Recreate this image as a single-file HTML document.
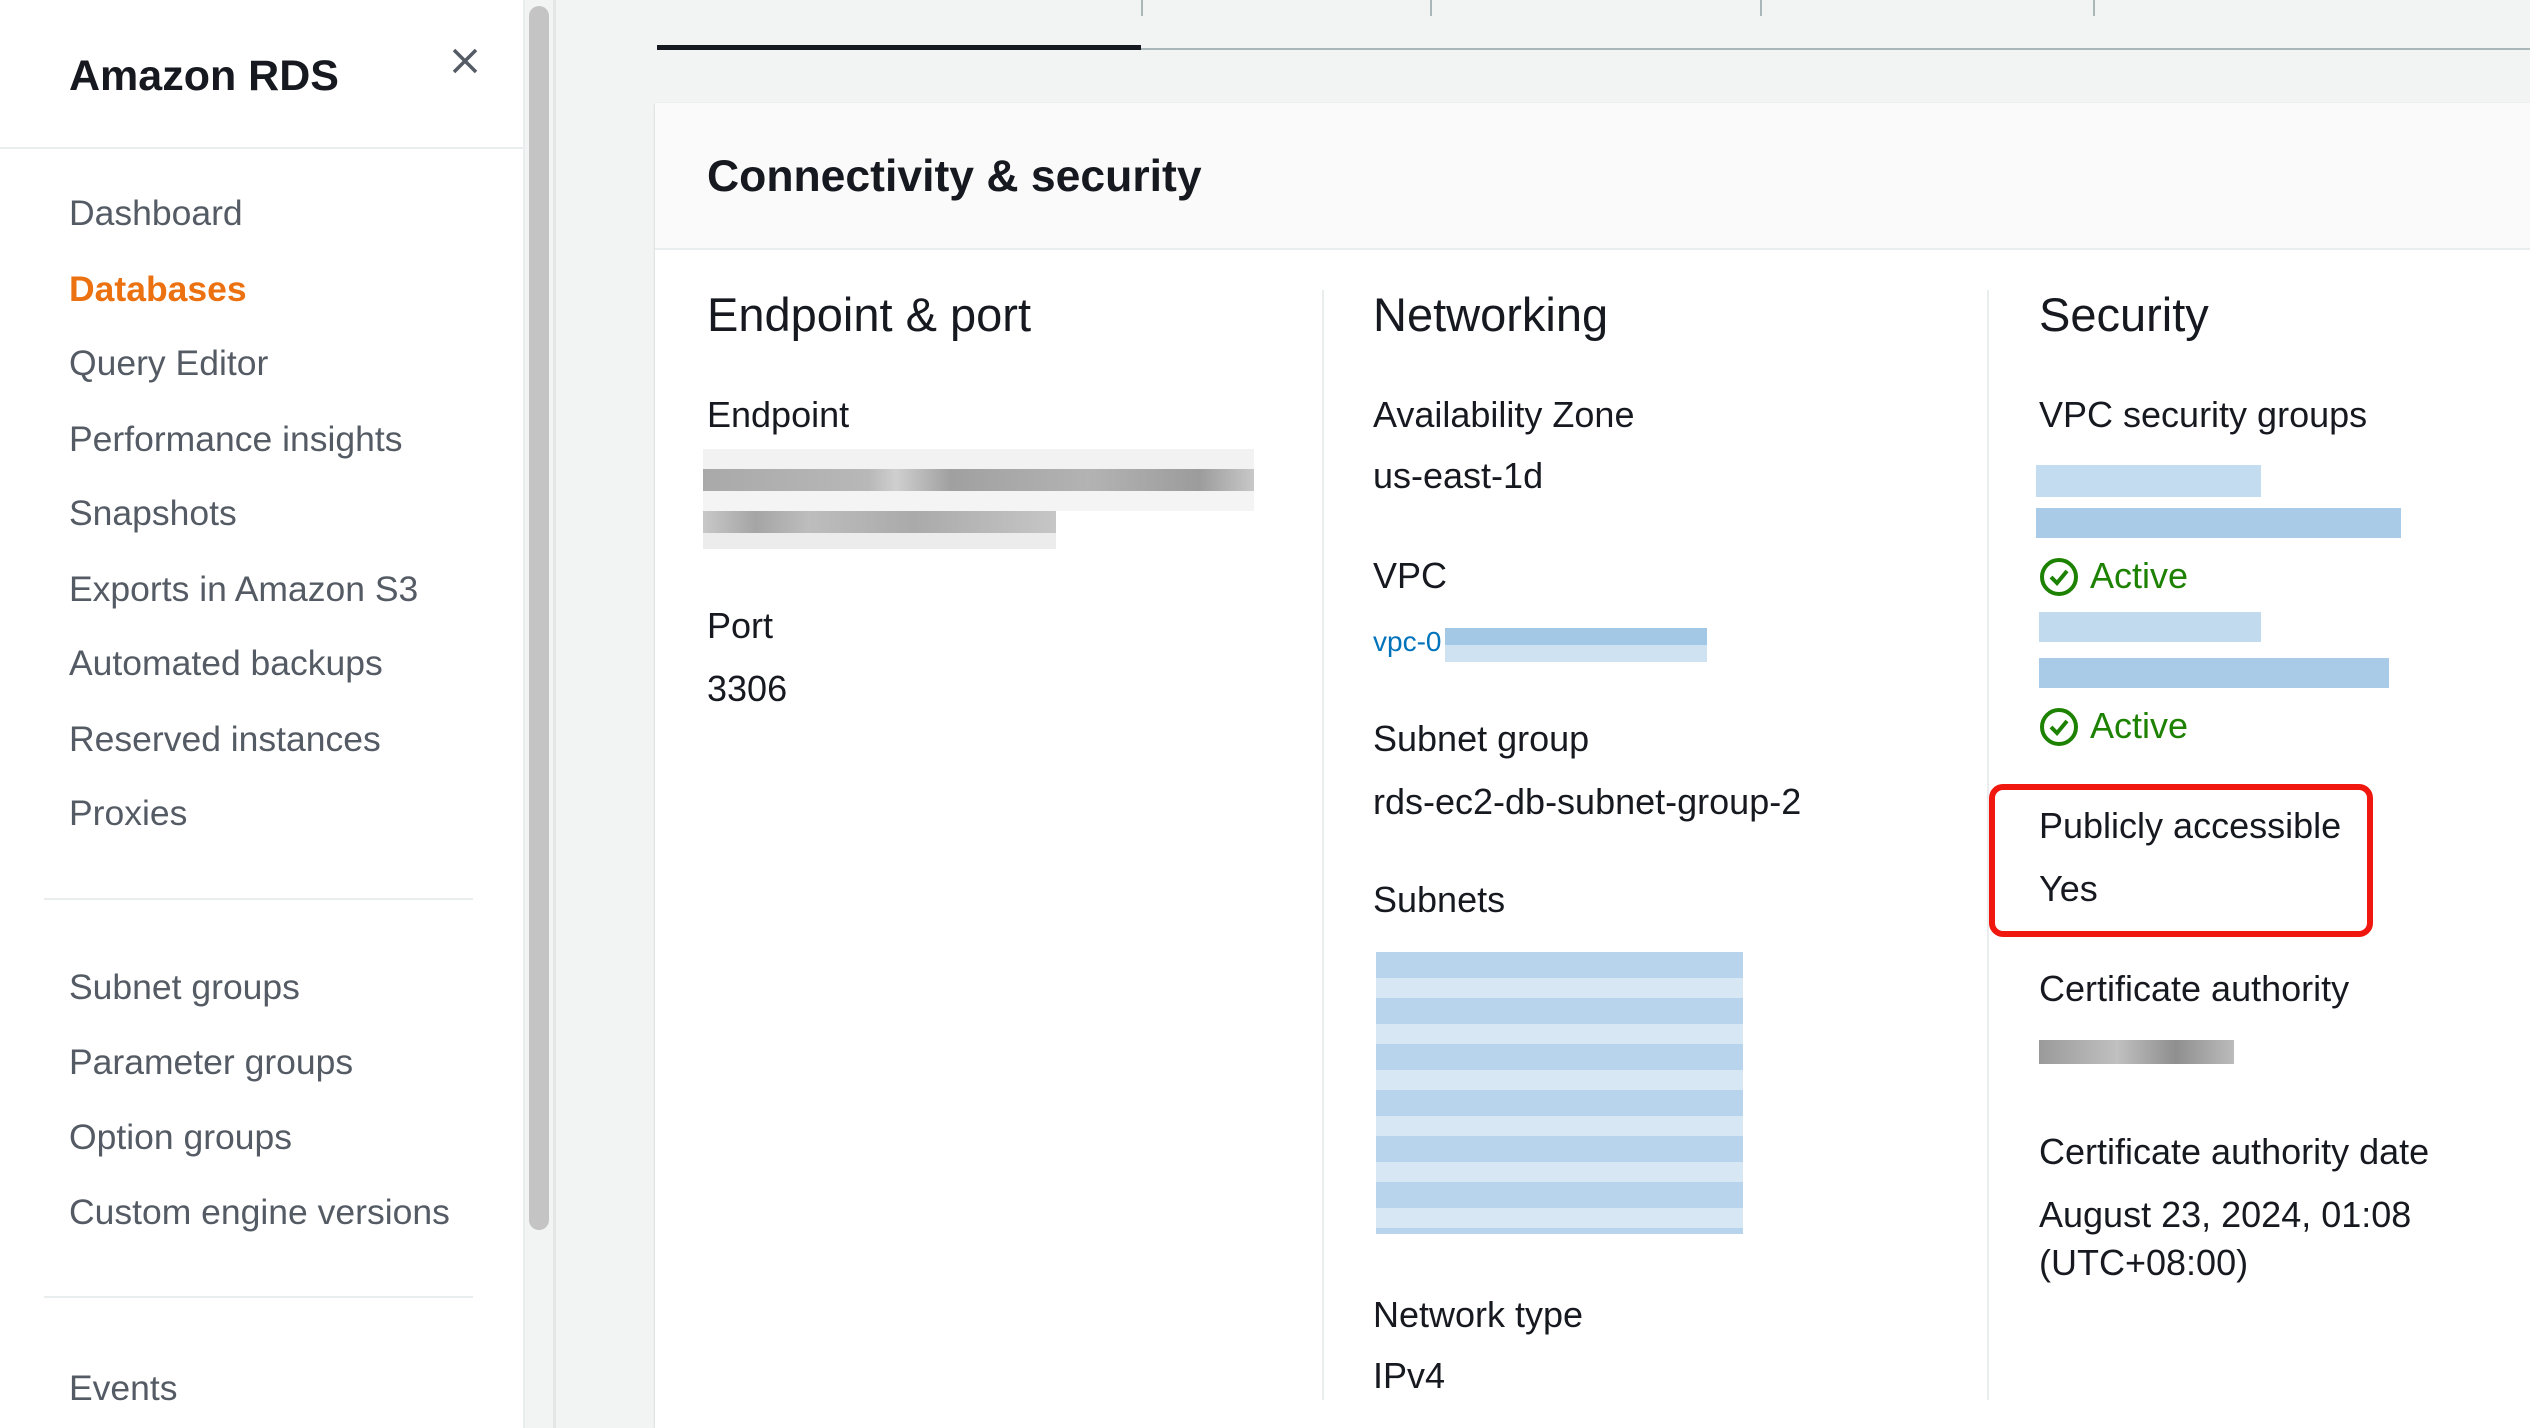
<!DOCTYPE html>
<html><head><meta charset="utf-8"><style>
*{margin:0;padding:0;box-sizing:border-box}
body{width:2530px;height:1428px;overflow:hidden;background:#f2f3f3;font-family:"Liberation Sans",sans-serif;color:#16191f;position:relative}
.t{position:absolute;white-space:nowrap;line-height:50px;transform:translateY(-50%)}
.nav{left:69px;font-size:35.5px;color:#545b64}
.lbl{font-size:36px;color:#16191f}
.h{font-size:47px;color:#16191f}
.b{position:absolute}
.act{color:#1d8102;font-size:36px}
</style></head><body>
<!-- sidebar -->
<div class="b" style="left:0;top:0;width:525px;height:1428px;background:#fff;border-right:2px solid #eaeded"></div>
<div class="b" style="left:529px;top:6px;width:20px;height:1224px;background:#c4c4c4;border-radius:10px"></div>
<div class="b" style="left:553px;top:0;width:3px;height:1428px;background:#e4e6e6"></div>
<div class="t" style="left:69px;top:76px;font-size:43px;font-weight:bold">Amazon RDS</div>
<svg class="b" style="left:451px;top:47px" width="28" height="28" viewBox="0 0 28 28"><path d="M3 3L25 25M25 3L3 25" stroke="#545b64" stroke-width="3.5" fill="none"/></svg>
<div class="b" style="left:0;top:147px;width:523px;height:2px;background:#eaeded"></div>
<div class="t nav" style="top:213px">Dashboard</div>
<div class="t nav" style="top:289px;color:#ec7211;font-weight:bold">Databases</div>
<div class="t nav" style="top:363px">Query Editor</div>
<div class="t nav" style="top:439px">Performance insights</div>
<div class="t nav" style="top:513px">Snapshots</div>
<div class="t nav" style="top:589px">Exports in Amazon S3</div>
<div class="t nav" style="top:663px">Automated backups</div>
<div class="t nav" style="top:739px">Reserved instances</div>
<div class="t nav" style="top:813px">Proxies</div>
<div class="b" style="left:44px;top:898px;width:429px;height:2px;background:#eaeded"></div>
<div class="t nav" style="top:987px">Subnet groups</div>
<div class="t nav" style="top:1062px">Parameter groups</div>
<div class="t nav" style="top:1137px">Option groups</div>
<div class="t nav" style="top:1212px">Custom engine versions</div>
<div class="b" style="left:44px;top:1296px;width:429px;height:2px;background:#eaeded"></div>
<div class="t nav" style="top:1388px">Events</div>
<!-- tabs -->
<div class="b" style="left:657px;top:48px;width:1873px;height:2px;background:#aab7b8"></div>
<div class="b" style="left:657px;top:45px;width:484px;height:5px;background:#16191f"></div>
<div class="b" style="left:1141px;top:0;width:2px;height:16px;background:#aab7b8"></div>
<div class="b" style="left:1430px;top:0;width:2px;height:16px;background:#aab7b8"></div>
<div class="b" style="left:1760px;top:0;width:2px;height:16px;background:#aab7b8"></div>
<div class="b" style="left:2093px;top:0;width:2px;height:16px;background:#aab7b8"></div>
<!-- card -->
<div class="b" style="left:655px;top:103px;width:1875px;height:1325px;background:#fff;box-shadow:0 1px 2px rgba(0,0,0,.2)"></div>
<div class="b" style="left:655px;top:103px;width:1875px;height:147px;background:#fafafa;border-bottom:2px solid #eaeded"></div>
<div class="t" style="left:707px;top:177px;font-size:44.5px;font-weight:bold">Connectivity &amp; security</div>
<div class="b" style="left:1322px;top:290px;width:2px;height:1110px;background:#eaeded"></div>
<div class="b" style="left:1987px;top:290px;width:2px;height:1110px;background:#eaeded"></div>
<!-- col1 -->
<div class="t h" style="left:707px;top:315px">Endpoint &amp; port</div>
<div class="t lbl" style="left:707px;top:415px">Endpoint</div>
<div class="b" style="left:703px;top:449px;width:551px;height:20px;background:#f2f2f2"></div>
<div class="b" style="left:703px;top:469px;width:551px;height:22px;background:linear-gradient(90deg,#a9a9a9,#b8b8b8 30%,#cfcfcf 35%,#a0a0a0 45%,#b3b3b3 70%,#9c9c9c 90%,#c8c8c8)"></div>
<div class="b" style="left:703px;top:491px;width:551px;height:20px;background:#f4f4f4"></div>
<div class="b" style="left:703px;top:511px;width:353px;height:22px;background:linear-gradient(90deg,#c8c8c8,#a5a5a5 15%,#bdbdbd 30%,#aaa 60%,#c6c6c6)"></div>
<div class="b" style="left:703px;top:533px;width:353px;height:16px;background:#ececec"></div>
<div class="t lbl" style="left:707px;top:626px">Port</div>
<div class="t lbl" style="left:707px;top:689px">3306</div>
<!-- col2 -->
<div class="t h" style="left:1373px;top:315px">Networking</div>
<div class="t lbl" style="left:1373px;top:415px">Availability Zone</div>
<div class="t lbl" style="left:1373px;top:476px">us-east-1d</div>
<div class="t lbl" style="left:1373px;top:576px">VPC</div>
<div class="t" style="left:1373px;top:642px;font-size:28px;color:#0073bb">vpc-0</div>
<div class="b" style="left:1445px;top:628px;width:262px;height:34px;background:linear-gradient(180deg,#a3c8e6 50%,#cfe2f2 50%)"></div>
<div class="t lbl" style="left:1373px;top:739px">Subnet group</div>
<div class="t lbl" style="left:1373px;top:802px">rds-ec2-db-subnet-group-2</div>
<div class="t lbl" style="left:1373px;top:900px">Subnets</div>
<div class="b" style="left:1376px;top:952px;width:367px;height:282px;background:repeating-linear-gradient(180deg,#b7d4ec 0 26px,#d8e7f4 26px 46px)"></div>
<div class="t lbl" style="left:1373px;top:1315px">Network type</div>
<div class="t lbl" style="left:1373px;top:1376px">IPv4</div>
<!-- col3 -->
<div class="t h" style="left:2039px;top:315px">Security</div>
<div class="t lbl" style="left:2039px;top:415px">VPC security groups</div>
<div class="b" style="left:2036px;top:465px;width:225px;height:32px;background:#c4dcef"></div>
<div class="b" style="left:2036px;top:508px;width:365px;height:30px;background:#aacbe7"></div>
<svg class="b" style="left:2039px;top:557px" width="40" height="40" viewBox="0 0 40 40"><circle cx="20" cy="20" r="17" stroke="#1d8102" stroke-width="4" fill="none"/><path d="M12 20l6 6 10-12" stroke="#1d8102" stroke-width="4" fill="none"/></svg>
<div class="t act" style="left:2090px;top:576px">Active</div>
<div class="b" style="left:2039px;top:612px;width:222px;height:30px;background:#c2daee"></div>
<div class="b" style="left:2039px;top:658px;width:350px;height:30px;background:#aacbe7"></div>
<svg class="b" style="left:2039px;top:707px" width="40" height="40" viewBox="0 0 40 40"><circle cx="20" cy="20" r="17" stroke="#1d8102" stroke-width="4" fill="none"/><path d="M12 20l6 6 10-12" stroke="#1d8102" stroke-width="4" fill="none"/></svg>
<div class="t act" style="left:2090px;top:726px">Active</div>
<div class="b" style="left:1989px;top:784px;width:384px;height:153px;border:6px solid #f0170f;border-radius:14px"></div>
<div class="t lbl" style="left:2039px;top:826px">Publicly accessible</div>
<div class="t lbl" style="left:2039px;top:889px">Yes</div>
<div class="t lbl" style="left:2039px;top:989px">Certificate authority</div>
<div class="b" style="left:2039px;top:1040px;width:195px;height:24px;background:linear-gradient(90deg,#9a9a9a,#c0c0c0 40%,#8f8f8f 70%,#bbb)"></div>
<div class="t lbl" style="left:2039px;top:1152px">Certificate authority date</div>
<div class="t lbl" style="left:2039px;top:1215px">August 23, 2024, 01:08</div>
<div class="t lbl" style="left:2039px;top:1263px">(UTC+08:00)</div>
</body></html>
